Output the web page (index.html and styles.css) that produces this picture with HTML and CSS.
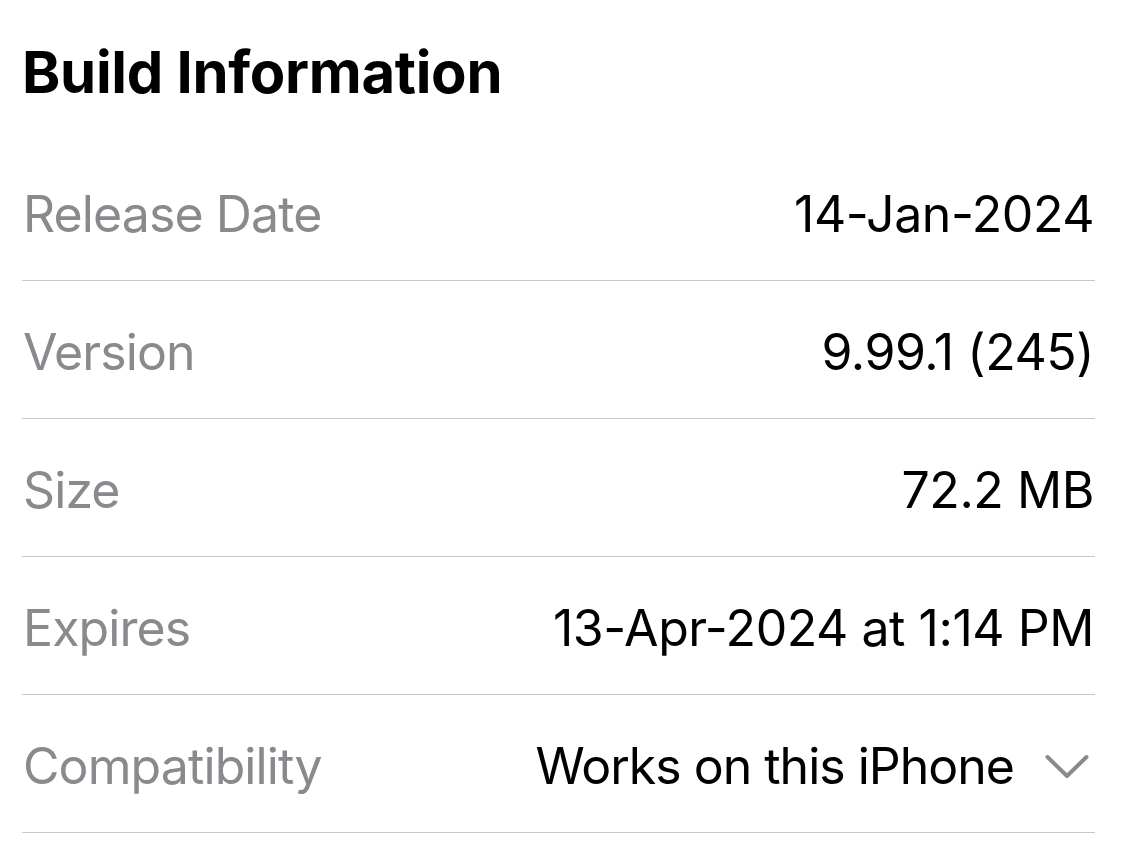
FILE: index.html
```html
<!DOCTYPE html>
<html lang="en">
<head>
<meta charset="utf-8">
<title>Build Information</title>
<link rel="stylesheet" href="styles.css">
</head>
<body>
<main class="page">
  <h1 class="title">Build Information</h1>
  <ul class="rows">
    <li class="row"><span class="label">Release Date</span><span class="value">14-Jan-2024</span></li>
    <li class="row"><span class="label">Version</span><span class="value">9.99.1 (245)</span></li>
    <li class="row"><span class="label">Size</span><span class="value">72.2 MB</span></li>
    <li class="row"><span class="label">Expires</span><span class="value">13-Apr-2024 at 1:14 PM</span></li>
    <li class="row"><span class="label">Compatibility</span><span class="value value-with-icon">Works on this iPhone<svg class="chevron" viewBox="0 0 44 26" width="44" height="26" aria-hidden="true"><path d="M2.5 3 L22 22 L41.5 3" fill="none" stroke="#8a8a8e" stroke-width="4" stroke-linecap="round" stroke-linejoin="round"/></svg></span></li>
  </ul>
</main>
</body>
</html>
```

FILE: styles.css
```css
html, body {
  margin: 0;
  padding: 0;
  background: #ffffff;
}

body {
  font-family: Inter, "Noto Sans", "Liberation Sans", sans-serif;
  color: #000000;
}

.page {
  padding: 0 28px 0 22px;
}

.title {
  margin: 0;
  height: 143px;
  box-sizing: border-box;
  padding-top: 37px;
  font-size: 58px;
  font-weight: 700;
  line-height: 70px;
  letter-spacing: -0.3px;
}

.rows {
  list-style: none;
  margin: 0;
  padding: 0;
}

.row {
  height: 138px;
  box-sizing: border-box;
  border-bottom: 1.5px solid #c8c8cb;
  display: flex;
  align-items: center;
  justify-content: space-between;
  font-size: 50px;
  padding-top: 4px;
}

.label {
  color: #8a8a8e;
  padding-left: 1px;
  letter-spacing: -0.9px;
}

.value {
  color: #000000;
  padding-right: 1px;
  letter-spacing: -0.45px;
}

.value-with-icon {
  display: flex;
  align-items: center;
  gap: 31px;
  padding-right: 6px;
  letter-spacing: -1px;
}

.chevron {
  display: block;
  margin-top: 2px;
}
```
